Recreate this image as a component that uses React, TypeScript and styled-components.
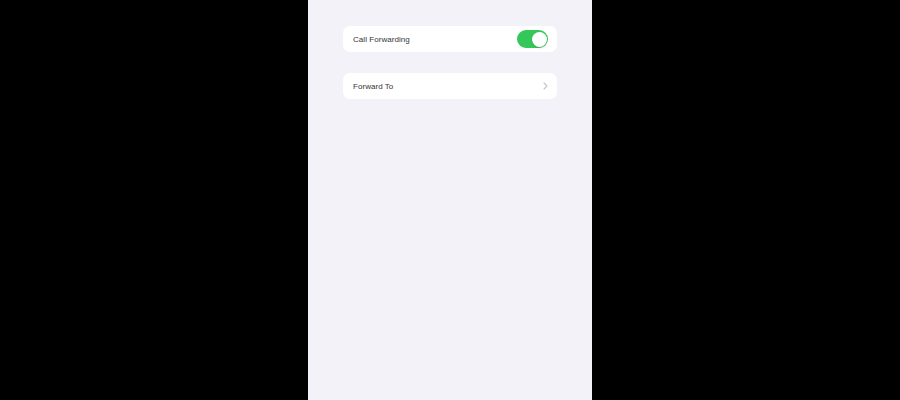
import styled, { createGlobalStyle } from 'styled-components';

const GlobalStyle = createGlobalStyle`
  html, body {
    margin: 0;
    padding: 0;
    background: #000;
  }
  body {
    font-family: 'Liberation Sans', Arial, sans-serif;
  }
`;

const Page = styled.div`
  width: 900px;
  height: 400px;
  display: flex;
  justify-content: center;
  background: #000;
  overflow: hidden;
`;

const Screen = styled.div`
  width: 284px;
  height: 400px;
  background: #f3f2f8;
  padding: 26px 35px 0;
  box-sizing: border-box;
  display: flex;
  flex-direction: column;
  gap: 21px;
`;

const Row = styled.div`
  height: 26px;
  background: #fff;
  border-radius: 7px;
  display: flex;
  align-items: center;
  justify-content: space-between;
  padding: 0 9px 0 10px;
`;

const Label = styled.span`
  font-size: 8px;
  color: #353538;
  letter-spacing: 0.05px;
`;

const Toggle = styled.div<{ $on: boolean }>`
  width: 31px;
  height: 18px;
  border-radius: 9px;
  background: ${p => (p.$on ? '#34c759' : '#e5e5ea')};
  display: flex;
  align-items: center;
  justify-content: ${p => (p.$on ? 'flex-end' : 'flex-start')};
  padding: 1.5px;
  box-sizing: border-box;
`;

const Knob = styled.div`
  width: 15px;
  height: 15px;
  border-radius: 50%;
  background: #fff;
  box-shadow: 0 1px 2px rgba(0, 0, 0, 0.15);
`;

const Chevron = () => (
  <svg width="5" height="8" viewBox="0 0 5 8">
    <path d="M1 1l3 3-3 3" fill="none" stroke="#c4c4c8" strokeWidth="1.1" strokeLinecap="round" strokeLinejoin="round" />
  </svg>
);

const App = () => (
  <>
    <GlobalStyle />
    <Page>
      <Screen>
        <Row>
          <Label>Call Forwarding</Label>
          <Toggle $on>
            <Knob />
          </Toggle>
        </Row>
        <Row>
          <Label>Forward To</Label>
          <Chevron />
        </Row>
      </Screen>
    </Page>
  </>
);

export default App;
